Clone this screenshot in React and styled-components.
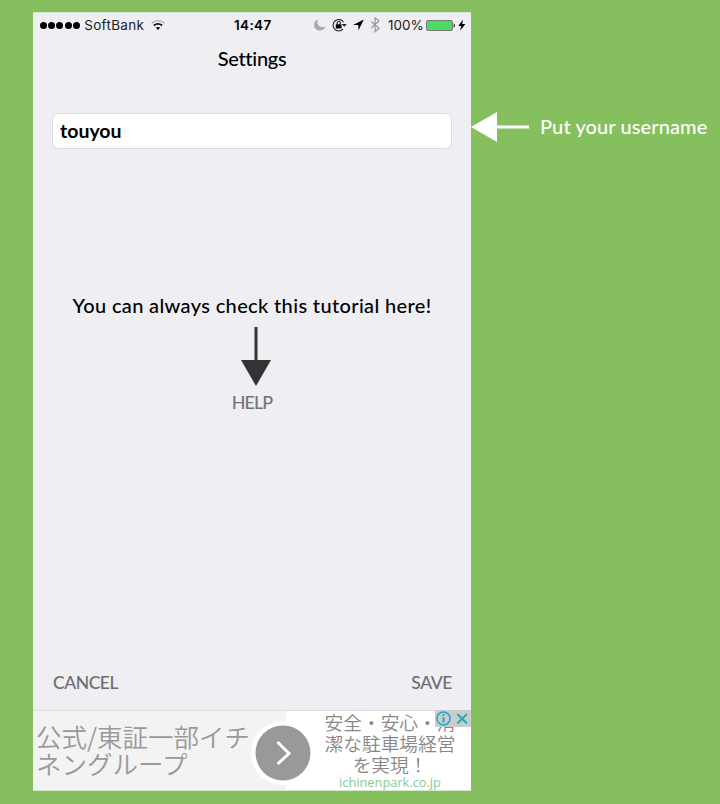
import React from "react";
import styled, { createGlobalStyle } from "styled-components";

const GlobalStyle = createGlobalStyle`
  * { box-sizing: border-box; }
  body { margin: 0; background: #85bf5e; }
`;

const Page = styled.main`
  display: flex;
  width: 720px;
  height: 804px;
  padding: 12px 0 0 33px;
  overflow: hidden;
  background: #85bf5e;
  font-family: Lato, "Noto Sans CJK JP", sans-serif;
`;

const Phone = styled.section`
  display: flex;
  flex-direction: column;
  width: 438px;
  height: 779px;
  flex: none;
  background: #efeef3;
  border-top: 1px solid #d5e6cd;
`;

const Label = styled.span`
  display: block;
  white-space: nowrap;
  font-size: ${(p) => p.$size}px;
  font-weight: ${(p) => p.$weight || 500};
  line-height: ${(p) => p.$line || 24}px;
  letter-spacing: ${(p) => p.$track || 0}px;
  color: ${(p) => p.$color || "#000"};
`;

const StatusBar = styled.header`
  display: grid;
  grid-template-columns: 194px 1fr auto;
  align-items: center;
  height: 22px;
  padding: 0 4px 0 7px;
  font-family: Inter, sans-serif;
`;

const Carrier = styled.div`
  display: flex;
  align-items: center;
`;

const Signal = styled.div`
  display: flex;
  gap: 1.2px;
  margin-right: 4.5px;
`;

const Dot = styled.i`
  width: 7px;
  height: 7px;
  border-radius: 50%;
  background: #000;
`;

const Indicators = styled.svg`
  display: block;
  width: 72px;
  height: 20px;
`;

const Wifi = styled.svg`
  display: block;
  width: 14px;
  height: 12px;
  margin-left: 7px;
`;

const Power = styled.svg`
  display: block;
  width: 42px;
  height: 16px;
`;

const StatusIcons = styled.div`
  display: flex;
  align-items: center;
`;

const Percent = styled(Label)`
  width: 37px;
  margin-left: 6px;
`;

const TitleBar = styled.div`
  display: flex;
  justify-content: center;
  height: 78px;
  padding-top: 11px;
`;

const Field = styled.div`
  display: flex;
  align-items: center;
  height: 36px;
  margin: 0 19px;
  padding: 1px 0 0 7px;
  border: 1px solid #dadadf;
  border-radius: 7px;
  background: #fff;
`;

const Tutorial = styled.div`
  display: flex;
  flex-direction: column;
  align-items: center;
  height: 523px;
  padding-top: 144px;
`;

const DownArrow = styled.svg`
  display: block;
  width: 30px;
  height: 59px;
  margin: 10px 0 4px 8px;
`;

const Actions = styled.footer`
  display: flex;
  justify-content: space-between;
  height: 39px;
  padding: 0 19px 0 20px;
`;

const Ad = styled.aside`
  position: relative;
  display: flex;
  height: 81px;
  border-top: 1px solid #dedee2;
  border-bottom: 1px solid #d5e8ca;
  background: #fff;
`;

const AdHeadline = styled.div`
  width: 253px;
  padding: 11px 0 0 3px;
  background: #f3f3f3;
  color: #999;
  font: 350 25.5px/27px "Noto Sans CJK JP", sans-serif;
  white-space: nowrap;
`;

const AdBody = styled.div`
  width: 144px;
  margin-left: 32px;
  color: #878787;
  font: 350 18.7px/21px "Noto Sans CJK JP", sans-serif;
  text-align: center;
  white-space: nowrap;
`;

const AdLink = styled.div`
  padding-top: 1px;
  color: #85cc99;
  font: 400 12.8px/15px "Open Sans", sans-serif;
`;

const AdButton = styled.svg`
  position: absolute;
  left: 217px;
  top: 10px;
  width: 66px;
  height: 66px;
`;

const AdBadge = styled.svg`
  position: absolute;
  right: 0;
  top: -1px;
  width: 36px;
  height: 17px;
`;

const Callout = styled.div`
  display: flex;
  align-items: center;
  height: 32px;
  margin-top: 99px;
`;

const CalloutText = styled(Label)`
  padding-bottom: 2px;
`;

const LeftArrow = styled.svg`
  display: block;
  width: 58px;
  height: 32px;
  margin-right: 11px;
`;

export default function App() {
  return (
    <Page>
      <GlobalStyle />
      <Phone>
        <StatusBar>
          <Carrier>
            <Signal>
              {[0, 1, 2, 3, 4].map((n) => <Dot key={n} />)}
            </Signal>
            <Label $size={13.5} $weight={400} $track={0.3} $color="#222">SoftBank</Label>
            <Wifi viewBox="0 0 14 12" fill="none">
              <path d="M.7 4.2Q7-.9 13.3 4.2" stroke="#aaa" strokeWidth="1.4" />
              <path d="M2.8 6.5Q7 3.2 11.2 6.5" stroke="#111" strokeWidth="1.6" />
              <path d="M4.8 8.6Q7 7.2 9.2 8.6L7 11Z" fill="#000" />
            </Wifi>
          </Carrier>
          <Label $size={13.5} $weight={600} $track={0.35}>14:47</Label>
          <StatusIcons>
            <Indicators viewBox="310 14.5 72 20" fill="none">
              <path d="M317.8 19C312.8 20.6 312.8 28.2 317.7 29.7C321 30.8 324.6 29.1 325.7 26C320.2 28 315.8 24.2 317.8 19Z" fill="#aaa" />
              <path d="M343.6 21.7A5.7 5.7 0 1 0 343 28.6" stroke="#222" strokeWidth="1.1" />
              <path d="M341.9 23.5H346.7L344.3 26.3Z" fill="#111" />
              <rect x="335.8" y="23.7" width="5.8" height="4.3" rx=".5" fill="#000" />
              <path d="M337.1 24V22.5A1.6 1.6 0 0 1 340.3 22.5V24" stroke="#000" />
              <path d="M363.8 18.9L353 24.4H358.4V30Z" fill="#000" />
              <path d="M371.2 21L379 27.8L375.1 31.1V17.2L379 20.5L371.2 27.5" stroke="#999" strokeWidth="1.2" />
            </Indicators>
            <Percent $size={13.5} $weight={400} $color="#222">100%</Percent>
            <Power viewBox="425 16 42 16">
              <rect x="426.5" y="19.5" width="26" height="10" rx="1.5" fill="#4cd964" stroke="#777" />
              <path d="M453.7 22.4Q455 22.7 455 24.5T453.7 26.6Z" fill="#222" />
              <path d="M463 18.5L458.3 24.9H461.2L460.1 29.7L465.4 23.1H462.2Z" fill="#000" />
            </Power>
          </StatusIcons>
        </StatusBar>
        <TitleBar><Label $size={20} $track={-0.3}>Settings</Label></TitleBar>
        <Field><Label $size={19.5} $weight={700} $track={0}>touyou</Label></Field>
        <Tutorial>
          <Label $size={20} $track={0.35}>You can always check this tutorial here!</Label>
          <DownArrow viewBox="0 0 30 59" fill="#333">
            <path d="M13.5 0H16.5V33H30L15 59L0 33H13.5Z" />
          </DownArrow>
          <Label $size={18} $track={-1} $color="#757575">HELP</Label>
        </Tutorial>
        <Actions>
          <Label $size={17.5} $track={-0.45} $color="#6d6d6d">CANCEL</Label>
          <Label $size={17.5} $track={-0.4} $color="#6d6d6d">SAVE</Label>
        </Actions>
        <Ad>
          <AdHeadline>公式/東証一部イチ<br />ネングループ</AdHeadline>
          <AdBody>
            安全・安心・清<br />潔な駐車場経営<br />を実現！
            <AdLink>ichinenpark.co.jp</AdLink>
          </AdBody>
          <AdButton viewBox="0 0 66 66">
            <circle cx="33" cy="32" r="32" fill="#fff" />
            <circle cx="33" cy="32" r="27.5" fill="#999" />
            <path d="M27.5 21L39 32.5L27.5 43" fill="none" stroke="#fff" strokeWidth="3" />
          </AdButton>
          <AdBadge viewBox="0 0 36 17" fill="none" stroke="#18acc9">
            <path d="M0 0H36V17H0Z" fill="#ccc" stroke="none" />
            <circle cx="8.5" cy="8.5" r="6.5" strokeWidth="1.5" />
            <path d="M8.5 7.2V12.5M8.5 4V5.8" strokeWidth="2" />
            <path d="M22.3 4L32 13.5M32 4L22.3 13.5" strokeWidth="1.9" />
          </AdBadge>
        </Ad>
      </Phone>
      <Callout>
        <LeftArrow viewBox="0 0 58 32" fill="#fff">
          <path d="M0 16L26 1V14.5H58V17.5H26V31Z" />
        </LeftArrow>
        <CalloutText $size={20} $track={0.1} $color="#fff">Put your username</CalloutText>
      </Callout>
    </Page>
  );
}
